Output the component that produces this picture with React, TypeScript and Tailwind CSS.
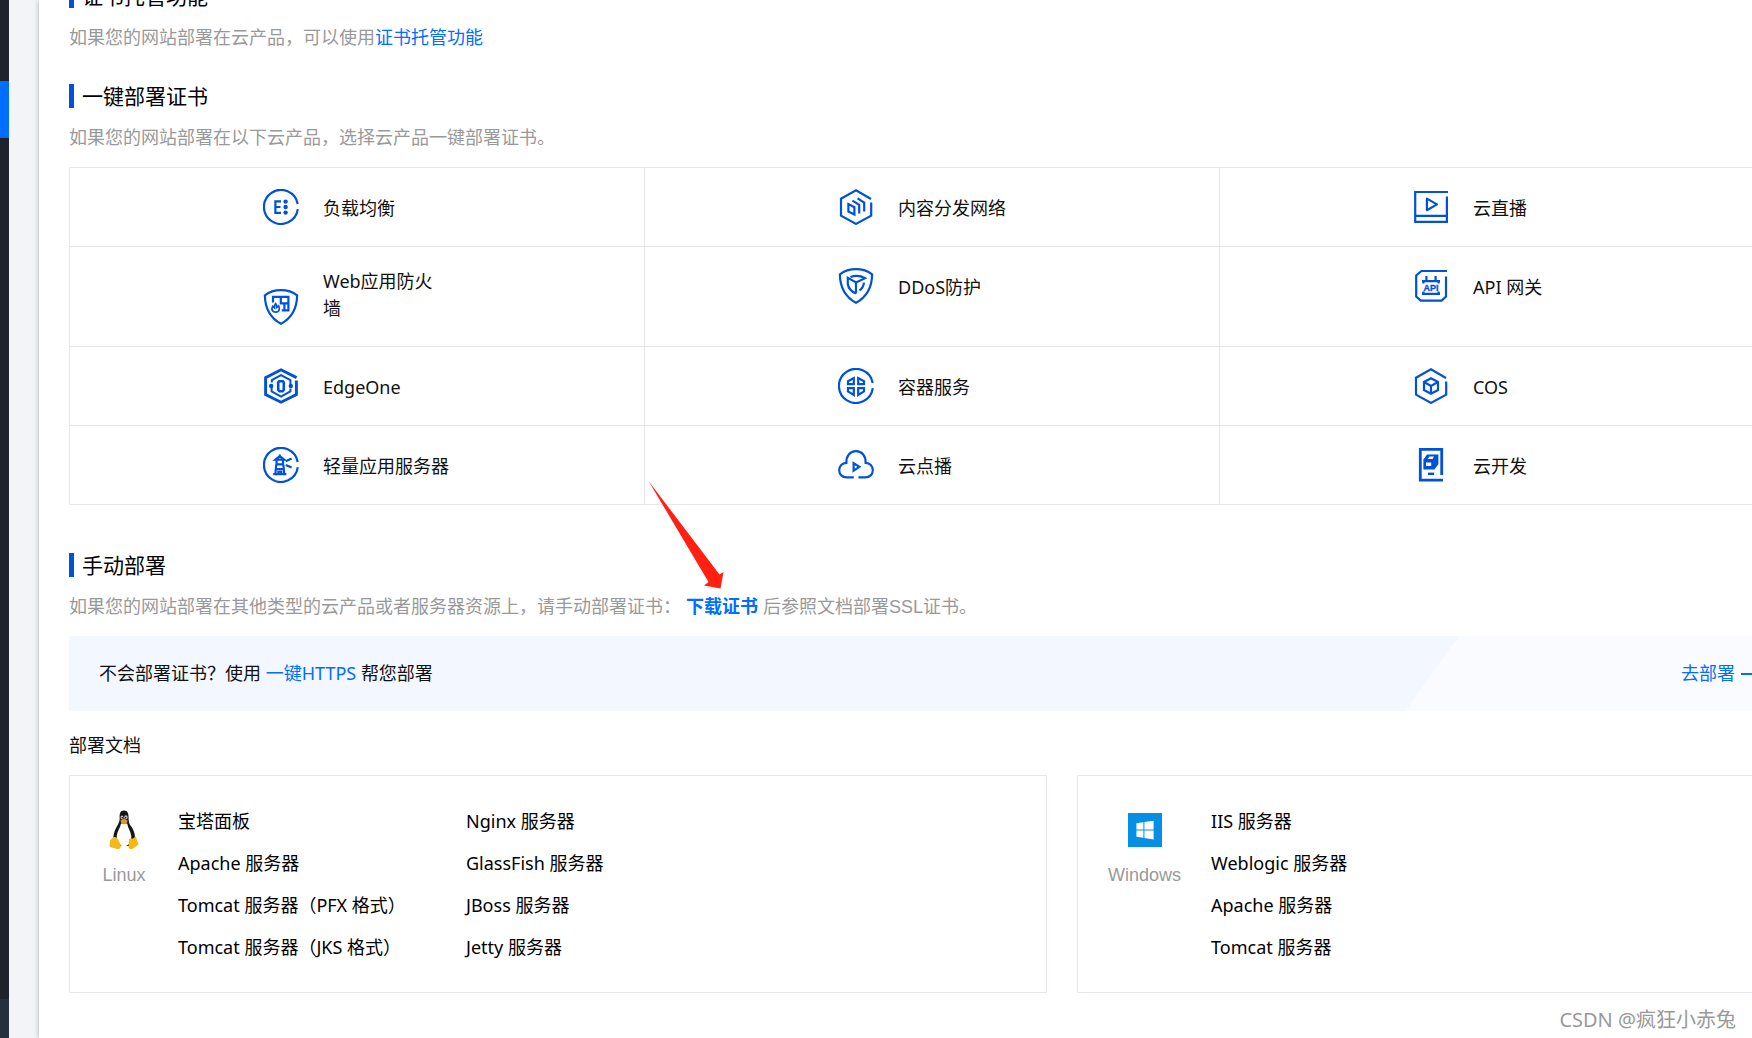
import type { ReactNode } from "react";

const BLUE = "#0052d9";

function Icon({ children, width = 2.2 }: { children: ReactNode; width?: number }) {
  return (
    <svg
      viewBox="0 0 36 36"
      className="w-9 h-9 shrink-0"
      fill="none"
      stroke={BLUE}
      strokeWidth={width}
      aria-hidden="true"
    >
      {children}
    </svg>
  );
}

const ring = "M34.7 15A17 17 0 1 0 34.8 20.2";
const shield =
  "M18 1.2C12 1.2 6.5 2.8 1.9 6.4C2 19 7 28.6 18 34.8C29 28.6 34 19 34.1 6.4C29.5 2.8 24 1.2 18 1.2Z";
const hexagon = "M33 10L18 1.3L3 9.7V26.6L18 34.9L33.2 26.6V13.6";

const icons = {
  clb: (
    <Icon>
      <path d={ring} />
      <path d="M18 12.4H12.4V23.8H18M12.4 18H17.5" />
      <g fill={BLUE} stroke="none">
        <circle cx="22.6" cy="12.6" r="2.2" />
        <circle cx="22.6" cy="18" r="2.2" />
        <circle cx="22.6" cy="23.6" r="2.2" />
      </g>
    </Icon>
  ),
  cdn: (
    <Icon>
      <path d={hexagon} />
      <path d="M10.4 15V22.6L16.4 25.4V18.2ZM14.4 11.6L21.2 15.8V24.6M19.6 9.4L26.2 13.6V22.4" />
    </Icon>
  ),
  live: (
    <Icon>
      <path d="M35 3H2.2V32.8H33.9V7.5M2.2 26.8H33.9" />
      <path d="M13.9 9.6V21.2L24 15.4Z" strokeLinejoin="round" />
    </Icon>
  ),
  waf: (
    <Icon>
      <path d={shield} />
      <path d="M10 13.4V7.8H25.4V21.4H18.8M17.8 7.8V14.4H25.4M21.4 14.4V21.4" />
      <path
        d="M12.6 14.6C13.8 15.8 13.8 17 13.6 18.4L15.6 16.8C17.6 20.4 15.8 23.2 12.8 23.2C9.4 23.2 8 20.6 9.6 17.4L11.2 18.6C11 17 11.6 15.8 12.6 14.6Z"
        strokeWidth="1.7"
      />
    </Icon>
  ),
  ddos: (
    <Icon>
      <path d={shield} />
      <path d="M18 25.4V14.4L9.8 9.8V16C10.4 20.4 13.4 23.6 18 25.4M18 14.4L27 10.2C22.6 7.6 17 7.4 12.4 9M26 14.6C25.6 18.2 24 20.6 21.4 22.4" />
    </Icon>
  ),
  api: (
    <Icon>
      <path d="M34 3H8.4L3.2 7.4V28.6L7.8 32.6H28.6L33 28.6V8.6" />
      <path d="M13.4 8V12.8M22.6 8V12.8M9 13.2H27M9 25.8H27M10.4 13V15.6M25.6 13V15.6M10.4 23.6V26M25.6 23.6V26" />
      <text
        x="18"
        y="22.6"
        textAnchor="middle"
        fill={BLUE}
        stroke={BLUE}
        strokeWidth="0.3"
        className="font-['Liberation_Sans'] text-[9px] font-bold"
      >
        API
      </text>
    </Icon>
  ),
  edgeone: (
    <Icon width={2.9}>
      <path d="M33.6 9.6L18 1.8L2.6 9.6V26.6L18 34.2L33.4 26.6V12.6" />
      <path
        d="M8.8 14.6V12.2L18 7.2L27.4 12.2V17M8.6 18.8V23.4L18 28.6L27.4 23.4V20.6"
        strokeWidth="2"
      />
      <path d="M16.2 13.2H19.8L20.8 14.4V21.8L19.6 23.2H16.4L15.2 21.8V14.4Z" strokeWidth="2.6" />
      <g fill={BLUE} stroke="none">
        <circle cx="8.2" cy="18" r="2.2" />
        <circle cx="27.8" cy="18" r="2.2" />
      </g>
    </Icon>
  ),
  tke: (
    <Icon>
      <path d={ring} />
      <path d="M10 13.2L15.8 10V16.2H10ZM26 13.2L20.2 10V16.2H26ZM10 23.4L15.8 27V20.2H10ZM26 23.4L20.2 27V20.2H26Z" />
    </Icon>
  ),
  cos: (
    <Icon>
      <path d={hexagon} />
      <path d="M18 10.2L25 14V22L18 25.8L11 22V14ZM11 14L18 18L25 14M18 18V25.8" />
    </Icon>
  ),
  lighthouse: (
    <Icon>
      <path d={ring} />
      <path d="M16.8 7.4V10M12.4 12.6L16.8 9.2L21.2 12.6ZM13.6 13V17.4H20V13M13.2 17.8L12.4 27M20.4 17.8L21.2 27M10.2 27.2H23.4M13 22H20.6M15.4 27V24.6H18.2V27" />
      <path d="M22.8 14.2L28.6 11.4M22.8 18L28.6 20.6" />
    </Icon>
  ),
  vod: (
    <Icon>
      <path d="M15.8 30.4H8.6C4.4 30.4 1.2 27.4 1.2 23.2C1.2 19.2 4.2 16 8.4 15.8C8 9 12 4.2 18 4.2C24 4.2 28 9 27.6 15.8C31.8 16 34.8 19.2 34.8 23.2C34.8 27.4 31.6 30.4 27.4 30.4H20.4" />
      <path d="M15.6 16.2V23.6L21.4 19.8Z" />
    </Icon>
  ),
  tcb: (
    <Icon width={2.8}>
      <path d="M28.7 28V2.4H7.3V33.2H30" />
      <path d="M14 7.4H25.4V17L21.4 22.4H10.4V12.6Z" fill={BLUE} stroke="none" />
      <path d="M14.6 12L16.6 9.6H21L19.6 12ZM13 15.4H18.2V19H13Z" fill="#fff" stroke="none" />
      <path d="M15 26.8H21.2" strokeWidth="2.4" />
    </Icon>
  ),
};

const products = [
  { name: "负载均衡", icon: icons.clb },
  { name: "内容分发网络", icon: icons.cdn },
  { name: "云直播", icon: icons.live },
  { name: "Web应用防火墙", icon: icons.waf },
  { name: "DDoS防护", icon: icons.ddos },
  { name: "API 网关", icon: icons.api },
  { name: "EdgeOne", icon: icons.edgeone },
  { name: "容器服务", icon: icons.tke },
  { name: "COS", icon: icons.cos },
  { name: "轻量应用服务器", icon: icons.lighthouse },
  { name: "云点播", icon: icons.vod },
  { name: "云开发", icon: icons.tcb },
];

const linuxDocs = [
  "宝塔面板",
  "Nginx 服务器",
  "Apache 服务器",
  "GlassFish 服务器",
  "Tomcat 服务器（PFX 格式）",
  "JBoss 服务器",
  "Tomcat 服务器（JKS 格式）",
  "Jetty 服务器",
];

const windowsDocs = ["IIS 服务器", "Weblogic 服务器", "Apache 服务器", "Tomcat 服务器"];

function SectionTitle({ children }: { children: ReactNode }) {
  return (
    <h2 className="flex items-center gap-2 h-6 text-[21px] leading-6 text-black">
      <span className="w-[5px] h-6 bg-[#0052d9]" />
      {children}
    </h2>
  );
}

function Tux() {
  return (
    <svg viewBox="0 0 30 40" className="w-[30px] h-10" aria-hidden="true">
      <path
        d="M15 0.6C11 0.6 10.4 4 10.7 8.4C10.9 12 8.6 15 6.8 18.6C5.4 21.4 4 25.6 4.6 29L9 36H21L25.8 29.6C26.6 25 24.6 19.6 22.6 17C20 13.6 19.6 12 19.6 7.8C19.6 3.4 18.6 0.6 15 0.6Z"
        fill="#161616"
      />
      <path
        d="M12 13.4C11.4 17.4 8.4 20.8 7.8 25.4C7.4 29.6 10 36.4 15 36.4C20.4 36.4 22.8 30.6 22.2 25.8C21.6 20.8 18.8 18 18.2 13.4Z"
        fill="#fff"
      />
      <ellipse cx="13" cy="7.4" rx="1.5" ry="2" fill="#bbb" />
      <ellipse cx="16.9" cy="7.4" rx="1.7" ry="2.1" fill="#bbb" />
      <circle cx="13.3" cy="7.8" r="0.8" fill="#111" />
      <circle cx="16.6" cy="7.8" r="0.8" fill="#111" />
      <path d="M11.4 10.6L15 8.8L18.8 10.8L17.8 12.8L14.8 14.4L12.2 12.8Z" fill="#e8951c" />
      <path
        d="M4.6 27.2C7.4 26.4 8.8 28.6 10 31.4C11.4 34 12.4 36 11.4 37.8C10 40 7.4 38.8 5 38C2.8 37.4 0.8 37.4 0.6 36C0.4 34.8 1 33.4 0.8 31.6C0.8 29.4 2.6 29.4 4.6 27.2Z"
        fill="#f4b914"
      />
      <path
        d="M20 29.6C20.6 27.6 22 28.8 24 28.4C25.6 28 25.6 26 27 27.2C28.2 28.6 27.6 30.6 28.8 32.2C30 34 29.8 34.6 28 35.8C26 37 24.4 39 22.4 39.2C20 39.4 19.2 37.4 19.6 34.8Z"
        fill="#f4b914"
      />
    </svg>
  );
}

function WindowsLogo() {
  return (
    <svg viewBox="0 0 34 34" className="w-[34px] h-[34px]" aria-hidden="true">
      <path d="M0 0H34V34H0Z" fill="#0590e4" />
      <path
        d="M8.4 10.2L15.4 9.2V16.4H8.4ZM16.4 9L25.6 7.8V16.4H16.4ZM8.4 17.6H15.4V24.8L8.4 23.8ZM16.4 17.6H25.6V26.4L16.4 25Z"
        fill="#fff"
      />
    </svg>
  );
}

function DocCard({
  title,
  logo,
  docs,
  className,
}: {
  title: string;
  logo: ReactNode;
  docs: string[];
  className: string;
}) {
  return (
    <div className={`flex gap-[30px] border border-[#e5e7ed] px-[30px] pt-8 pb-[31px] ${className}`}>
      <div className="min-w-12 shrink-0 flex flex-col items-center">
        <div className="h-11 flex items-center">{logo}</div>
        <p className="mt-2.5 font-['Liberation_Sans',sans-serif] text-[#999]">{title}</p>
      </div>
      <ul className="grid grid-cols-[288px_288px] gap-y-[15px] content-start text-black">
        {docs.map((doc) => (
          <li key={doc} className={docs.length > 4 ? "" : "col-span-2"}>
            <a href="#doc">{doc}</a>
          </li>
        ))}
      </ul>
    </div>
  );
}

export default function App() {
  return (
    <div className="relative min-h-screen flex overflow-hidden bg-[#f3f4f8] font-['Noto_Sans','Noto_Sans_CJK_SC',sans-serif] text-lg leading-[27px] text-[#111]">
      <aside className="w-[9px] shrink-0 flex flex-col bg-[#1e222d]">
        <div className="mt-[81px] h-[57px] bg-[#006eff]" />
        <div className="mt-auto h-[39px] bg-[#262f3e]" />
      </aside>

      <main className="ml-[30px] flex-1 min-w-0 bg-white pl-[30px] shadow-[0_0_5px_rgba(40,44,60,0.35)]">
        {/* the content is wider than the window and runs off its right edge */}
        <div className="-mt-4 -mr-[43px]">
          <section>
            <SectionTitle>证书托管功能</SectionTitle>
            <p className="mt-4 text-[#999]">
              如果您的网站部署在云产品，可以使用
              <a href="#hosting" className="text-[#006eff]">
                证书托管功能
              </a>
            </p>
          </section>

          <section className="mt-[33px]">
            <SectionTitle>一键部署证书</SectionTitle>
            <p className="mt-4 text-[#999]">如果您的网站部署在以下云产品，选择云产品一键部署证书。</p>
            <ul className="mt-4 grid grid-cols-3 border-l border-t border-[#e5e7ed]">
              {products.map((product) => (
                <li
                  key={product.name}
                  className="flex justify-center items-start border-r border-b border-[#e5e7ed] py-[21px]"
                >
                  <a href="#product" className="w-[188px] flex items-end gap-6">
                    {product.icon}
                    <span className="w-[126px] pb-[3px]">{product.name}</span>
                  </a>
                </li>
              ))}
            </ul>
          </section>

          <section className="mt-12">
            <SectionTitle>手动部署</SectionTitle>
            <p className="mt-4 text-[#999]">
              如果您的网站部署在其他类型的云产品或者服务器资源上，请手动部署证书：
              <a href="#download" className="relative mx-[5px] font-bold text-[#006eff]">
                下载证书
                <svg
                  viewBox="0 0 76 108"
                  className="absolute -left-[38px] -top-[113px] w-[76px] h-[108px] max-w-none"
                  aria-hidden="true"
                >
                  <path d="M0.5 0L71.5 93.5L75.5 91L72.5 107.5L56 104.5L60.5 101Z" fill="#ff2012" />
                </svg>
              </a>
              后参照文档部署<span className="font-['Liberation_Sans'] leading-none">SSL</span>证书。
            </p>

            <div className="mt-4 relative h-[75px] flex items-center justify-between bg-[#f3f7ff] px-[30px]">
              <div className="absolute inset-y-0 right-0 w-[390px] bg-[#f9fbff] [clip-path:polygon(54px_0,100%_0,100%_100%,0_100%)]" />
              <p>
                不会部署证书？使用{" "}
                <a href="#https" className="text-[#006eff]">
                  一键HTTPS
                </a>{" "}
                帮您部署
              </p>
              <a href="#deploy" className="relative flex items-center gap-1.5 text-[#006eff]">
                去部署
                <svg
                  viewBox="0 0 24 16"
                  className="w-6 h-4"
                  fill="none"
                  stroke="currentColor"
                  strokeWidth="2"
                  aria-hidden="true"
                >
                  <path d="M0 8H22M16 2L22 8L16 14" />
                </svg>
              </a>
            </div>

            <h3 className="mt-[21px]">部署文档</h3>
            <div className="mt-4 flex gap-[30px]">
              <DocCard title="Linux" logo={<Tux />} docs={linuxDocs} className="w-[978px] shrink-0" />
              <DocCard title="Windows" logo={<WindowsLogo />} docs={windowsDocs} className="flex-1 min-w-0" />
            </div>
          </section>
        </div>
      </main>

      <div className="absolute right-4 bottom-[5px] text-xl leading-[27px] text-[#999] [text-shadow:1px_1px_0_#fff]">
        CSDN @疯狂小赤兔
      </div>
    </div>
  );
}
